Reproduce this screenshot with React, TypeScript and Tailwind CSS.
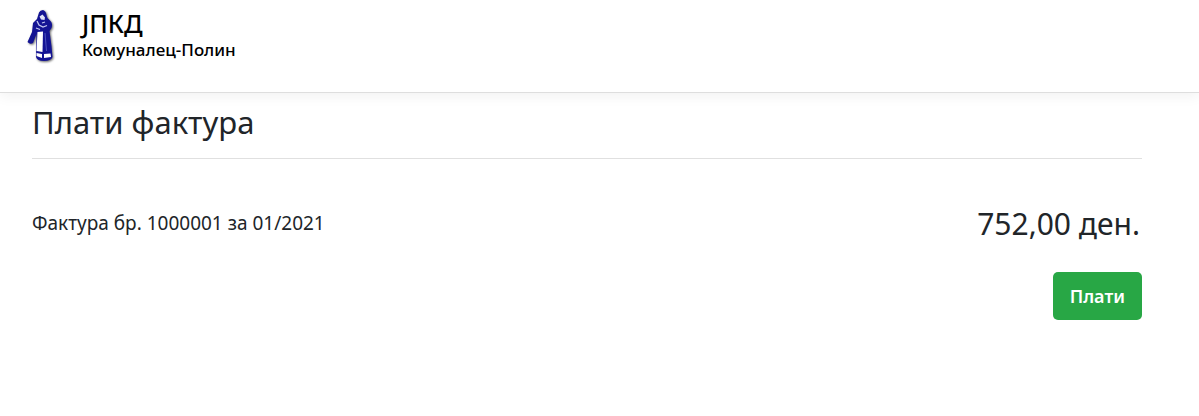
import React from "react";

const Logo: React.FC = () => (
  <svg width="34" height="58" viewBox="0 0 34 58" aria-hidden="true" className="shrink-0">
    <g className="drop-shadow-[1px_1px_1px_rgba(0,0,0,0.6)]">
      <path
        d="M15 4.5Q16 2 19 2Q22 3 22.5 7L23.5 10L26.5 13Q29 16 27.5 20L25.5 23L27.5 38L28.5 49Q27 53 20 53Q13 53 12 49L12.5 26L9 35Q6 37 3.5 34L8 24L9 15L13 11Z"
        fill="#141494"
      />
      <path d="M13.5 24L19 23.5L18.5 44L12.5 43Z" fill="#fff" />
      <path d="M12.5 45L18 46L18 50L12.5 48Z" fill="#fff" />
      <path d="M20 46L26.5 45.5L27 49L20 50Z" fill="#fff" />
      <path d="M15.5 8.5L18.5 6.5L21 9.5L20.5 12L17 11.5Z" fill="#dfe1f7" />
      <path
        d="M13 13L15 17L19 19L23 17.5M18 15L21 14M12 20L16 21.5"
        fill="none"
        stroke="#c3c6ef"
        strokeWidth="1.3"
      />
      <path d="M21 25L22.5 43" stroke="#4c50bd" strokeWidth="1" />
    </g>
  </svg>
);

const App: React.FC = () => {
  return (
    <div className="min-h-screen bg-white font-['Noto_Sans',sans-serif] text-[#212529]">
      <header className="flex h-[93px] items-start border-b border-[#dedede] px-6 pt-2 shadow-[0_4px_12px_rgba(0,0,0,0.05)]">
        <Logo />
        <div className="pl-6 font-medium text-black">
          <p className="text-[25px] leading-[31px]">ЈПКД</p>
          <p className="text-[17px] leading-[21px]">Комуналец-Полин</p>
        </div>
      </header>
      <main className="pr-[57px] pl-8">
        <h1 className="border-b border-[#e0e0e0] pt-2 pb-3.5 text-[31px] leading-[43px]">Плати фактура</h1>
        <div className="flex items-center justify-between pt-11">
          <p className="text-[19px]">Фактура бр. 1000001 за 01/2021</p>
          <p className="pr-0.5 text-[30px] leading-[41px]">752,00 ден.</p>
        </div>
        <div className="flex justify-end pt-7">
          <button
            type="button"
            className="h-12 cursor-pointer rounded-[5px] bg-[#28a745] px-[17px] text-[18px] font-semibold text-white"
          >
            Плати
          </button>
        </div>
      </main>
    </div>
  );
};

export default App;
